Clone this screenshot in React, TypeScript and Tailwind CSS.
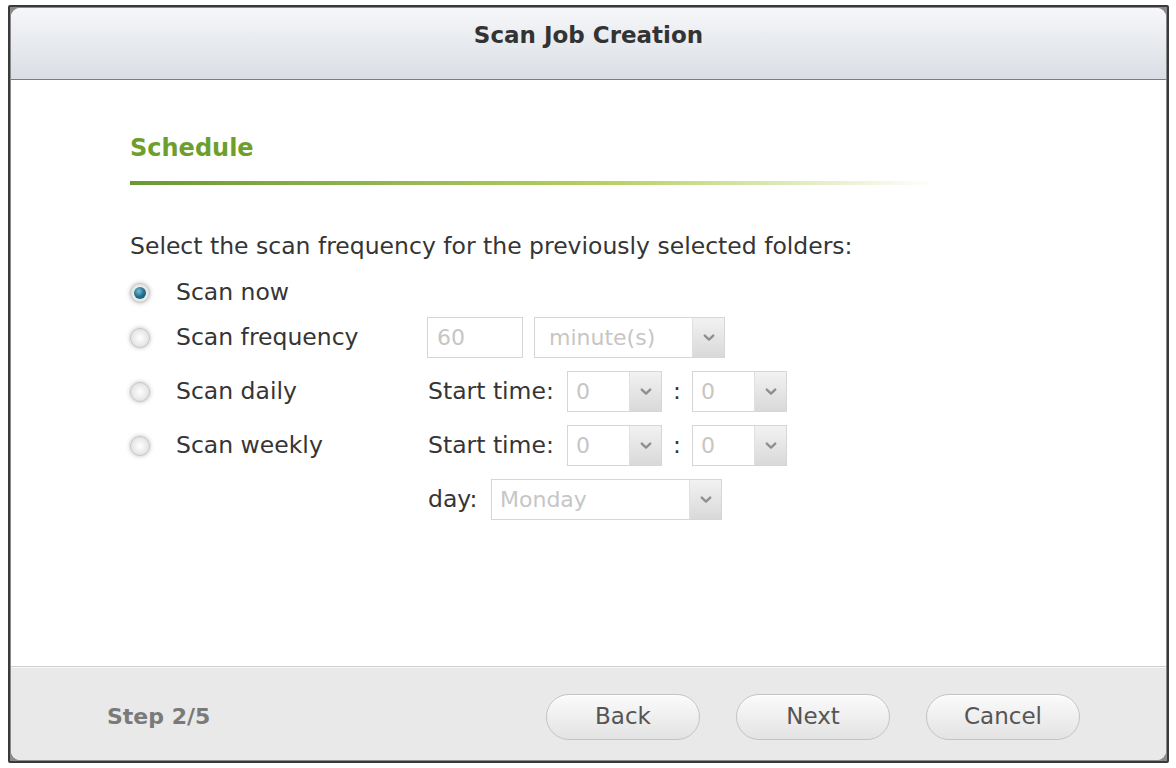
import React from "react";

const font = { fontFamily: '"DejaVu Sans", "Liberation Sans", sans-serif' };

function Chevron() {
  return (
    <svg width="12" height="8" viewBox="0 0 12 8" fill="none">
      <path d="M1.8 1.6 L6 5.6 L10.2 1.6" stroke="#8f8f8f" strokeWidth="2.4" strokeLinecap="round" strokeLinejoin="round" />
    </svg>
  );
}

function Select({ value, width, pl = "pl-[8px]" }: { value: string; width: string; pl?: string }) {
  return (
    <div className={`flex h-[41px] ${width} border border-[#d6d6d6] bg-white`}>
      <div className={`flex flex-1 items-center ${pl} text-[22px] text-[#c6c6c6]`}>{value}</div>
      <div className="flex w-[32px] items-center justify-center border-l border-[#e0e0e0] bg-linear-to-b from-[#f2f2f2] to-[#d9d9d9]">
        <Chevron />
      </div>
    </div>
  );
}

function Radio({ checked }: { checked?: boolean }) {
  return (
    <div className="flex h-[20px] w-[20px] items-center justify-center rounded-full border border-[#c4c4c4] bg-radial from-[#ffffff] to-[#d8d8d8] shadow-[0_0_4px_rgba(110,110,140,0.5)]">
      {checked && (
        <div className="h-[12px] w-[12px] rounded-full bg-radial-[at_40%_35%] from-[#79bdd4] via-[#22708c] to-[#154b60]" />
      )}
    </div>
  );
}

function Button({ label }: { label: string }) {
  return (
    <div className="flex h-[46px] w-[154px] items-center justify-center rounded-full border border-[#c3c3c3] bg-linear-to-b from-[#fbfbfb] to-[#e3e3e3] text-[23px] text-[#555] shadow-[inset_0_1px_0_#ffffff]">
      {label}
    </div>
  );
}

export default function App() {
  return (
    <div className="h-[768px] w-[1176px] bg-white pl-[8px] pt-[5px]" style={font}>
      <div className="h-[758px] w-[1161px] rounded-[2px] border-[2px] border-[#3a3a3a] bg-[#8a8a8a] p-[1px]">
        <div className="flex h-full w-full flex-col overflow-hidden rounded-[9px] bg-white">
          {/* Header */}
          <div className="flex h-[72px] shrink-0 items-center justify-center border-b border-[#7c7c7c] bg-linear-to-b from-[#f6f7f9] to-[#dadee4]">
            <span className="-mt-[16px] text-[23px] font-bold text-[#333]">Scan Job Creation</span>
          </div>

          {/* Body */}
          <div className="flex flex-1 flex-col pl-[119px] pt-[54px] text-[#353535]">
            <div className="h-[28px] text-[24px] leading-[28px] font-bold text-[#6e9f2c]">Schedule</div>
            <div className="mt-[19px] h-[4px] w-[805px] bg-linear-to-r from-[#6a9832] via-[#b7d165] via-60% to-transparent" />

            <div className="mt-[47px] h-[28px] text-[23.5px] leading-[28px]">
              Select the scan frequency for the previously selected folders:
            </div>

            <div className="mt-[12px] flex flex-col text-[23.5px]">
              <div className="flex h-[41px] items-center">
                <div className="flex w-[298px] items-center gap-[26px]">
                  <Radio checked />
                  <span>Scan now</span>
                </div>
              </div>

              <div className="mt-[4px] flex h-[41px] items-center">
                <div className="flex w-[297px] items-center gap-[26px]">
                  <Radio />
                  <span>Scan frequency</span>
                </div>
                <div className="flex items-center gap-[11px]">
                  <div className="flex h-[41px] w-[96px] items-center border border-[#d6d6d6] pl-[9px] text-[22px] text-[#c6c6c6]">
                    60
                  </div>
                  <Select value="minute(s)" width="w-[191px]" pl="pl-[14px]" />
                </div>
              </div>

              <div className="mt-[13px] flex h-[41px] items-center">
                <div className="flex w-[298px] items-center gap-[26px]">
                  <Radio />
                  <span>Scan daily</span>
                </div>
                <span className="w-[139px]">Start time:</span>
                <Select value="0" width="w-[95px]" />
                <span className="w-[30px] text-center">:</span>
                <Select value="0" width="w-[95px]" />
              </div>

              <div className="mt-[13px] flex h-[41px] items-center">
                <div className="flex w-[298px] items-center gap-[26px]">
                  <Radio />
                  <span>Scan weekly</span>
                </div>
                <span className="w-[139px]">Start time:</span>
                <Select value="0" width="w-[95px]" />
                <span className="w-[30px] text-center">:</span>
                <Select value="0" width="w-[95px]" />
              </div>

              <div className="mt-[13px] flex h-[41px] items-center">
                <div className="w-[298px]" />
                <span className="w-[63px]">day:</span>
                <Select value="Monday" width="w-[231px]" />
              </div>
            </div>
          </div>

          {/* Footer */}
          <div className="flex h-[94px] shrink-0 items-center border-t border-[#cfcfcf] bg-[#e9e9e9] pl-[96px] pr-[86px] pt-[6px] shadow-[inset_0_1px_0_#f7f7f7]">
            <span className="text-[22px] font-bold text-[#7a7a7a]">Step 2/5</span>
            <div className="ml-auto flex items-center gap-[36px]">
              <Button label="Back" />
              <Button label="Next" />
              <Button label="Cancel" />
            </div>
          </div>
        </div>
      </div>
    </div>
  );
}
